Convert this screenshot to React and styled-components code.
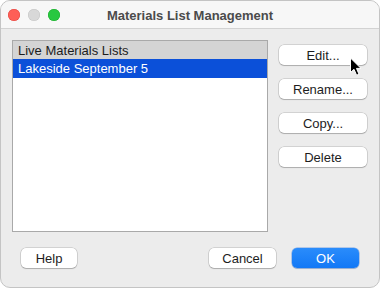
import React from "react";
import styled, { createGlobalStyle } from "styled-components";

const Global = createGlobalStyle`
  html, body { margin: 0; padding: 0; background: #ffffff; }
  body { font-family: "Liberation Sans", Arial, Helvetica, sans-serif; -webkit-font-smoothing: antialiased; }
  * { box-sizing: border-box; }
`;

const Window = styled.div`
  position: relative;
  width: 380px;
  height: 288px;
  border: 1px solid #c4c4c4;
  border-radius: 10px;
  overflow: hidden;
  background: #ececec;
  display: flex;
  flex-direction: column;
`;

const TitleBar = styled.div`
  height: 28px;
  flex: none;
  background: #f7f7f7;
  border-bottom: 1px solid #d2d2d2;
  display: grid;
  grid-template-columns: 1fr auto 1fr;
  align-items: center;
  padding: 0 7px;
`;

const Lights = styled.div`
  display: flex;
  gap: 8px;
  align-items: center;
`;

const Light = styled.span`
  width: 12px;
  height: 12px;
  border-radius: 50%;
  background: ${(p) => p.$color};
  box-shadow: inset 0 0 0 0.5px ${(p) => p.$edge};
`;

const Title = styled.div`
  font-weight: bold;
  font-size: 13px;
  color: #4b4b4b;
  margin-top: 1px;
`;

const Body = styled.div`
  flex: 1;
  display: flex;
  flex-direction: column;
  padding: 11px 11px 0 11px;
`;

const Main = styled.div`
  display: flex;
  gap: 11px;
`;

const ListBox = styled.div`
  width: 256px;
  height: 192px;
  background: #ffffff;
  border: 1px solid #a9a9a9;
  display: flex;
  flex-direction: column;
`;

const Row = styled.div`
  height: ${(p) => (p.$header ? "18px" : "19px")};
  padding-left: 5px;
  display: flex;
  align-items: center;
  font-size: 13px;
  color: ${(p) => (p.$selected ? "#ffffff" : "#1c1c1c")};
  background: ${(p) => (p.$header ? "#d4d4d4" : p.$selected ? "#0b50d9" : "transparent")};
`;

const SideButtons = styled.div`
  display: flex;
  flex-direction: column;
  gap: 14px;
  padding-top: 5px;
`;

const Button = styled.button`
  width: ${(p) => p.$w}px;
  height: 20px;
  border: none;
  border-radius: 5px;
  font-family: inherit;
  font-size: 13px;
  padding: 0;
  color: ${(p) => (p.$primary ? "#ffffff" : "#1d1d1d")};
  background: ${(p) =>
    p.$primary ? "linear-gradient(#2a8cfb, #1278f6)" : "#ffffff"};
  box-shadow: ${(p) =>
    p.$primary
      ? "0 0 0 0.5px rgba(0,90,220,0.5), 0 1px 1px rgba(0,0,0,0.15)"
      : "0 0 0 0.5px rgba(0,0,0,0.22), 0 1px 1px rgba(0,0,0,0.18)"};
  display: flex;
  align-items: center;
  justify-content: center;
`;

const Footer = styled.div`
  display: flex;
  align-items: center;
  padding: 16px 9px 0 9px;
`;

const Spacer = styled.div`
  flex: 1;
`;

const FooterRight = styled.div`
  display: flex;
  gap: 16px;
`;

const Cursor = styled.svg`
  position: absolute;
  left: 348px;
  top: 56px;
  width: 14px;
  height: 20px;
`;

export default function App() {
  return (
    <>
      <Global />
      <Window>
        <TitleBar>
          <Lights>
            <Light $color="#fe5f57" $edge="#e0443e" />
            <Light $color="#d8d8d8" $edge="#c4c4c4" />
            <Light $color="#28c840" $edge="#1aab29" />
          </Lights>
          <Title>Materials List Management</Title>
          <div />
        </TitleBar>
        <Body>
          <Main>
            <ListBox>
              <Row $header>Live Materials Lists</Row>
              <Row $selected>Lakeside September 5</Row>
            </ListBox>
            <SideButtons>
              <Button $w={88}>Edit...</Button>
              <Button $w={88}>Rename...</Button>
              <Button $w={88}>Copy...</Button>
              <Button $w={88}>Delete</Button>
            </SideButtons>
          </Main>
          <Footer>
            <Button $w={56}>Help</Button>
            <Spacer />
            <FooterRight>
              <Button $w={67}>Cancel</Button>
              <Button $w={67} $primary>OK</Button>
            </FooterRight>
          </Footer>
        </Body>
        <Cursor viewBox="0 0 14 20">
          <path
            d="M1.5 1 L1.5 15.5 L5 12.3 L7.6 18.2 L10 17.2 L7.5 11.4 L12 11.4 Z"
            fill="#000"
            stroke="#fff"
            strokeWidth="1"
            strokeLinejoin="round"
          />
        </Cursor>
      </Window>
    </>
  );
}
